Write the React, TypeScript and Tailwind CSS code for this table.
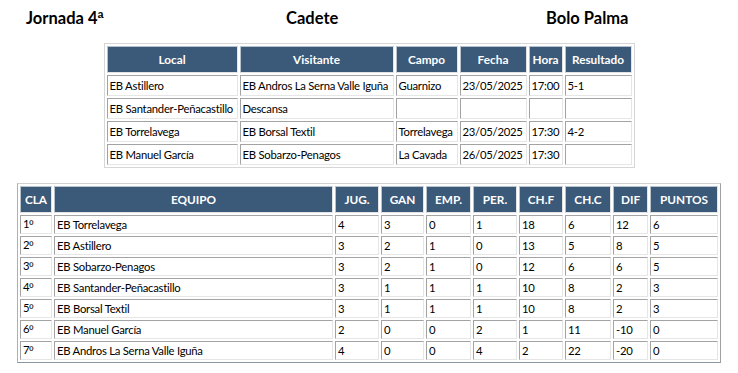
const partidos = [
  { local: "EB Astillero", visitante: "EB Andros La Serna Valle Iguña", campo: "Guarnizo", fecha: "23/05/2025", hora: "17:00", resultado: "5-1" },
  { local: "EB Santander-Peñacastillo", visitante: "Descansa", campo: "", fecha: "", hora: "", resultado: "" },
  { local: "EB Torrelavega", visitante: "EB Borsal Textil", campo: "Torrelavega", fecha: "23/05/2025", hora: "17:30", resultado: "4-2" },
  { local: "EB Manuel García", visitante: "EB Sobarzo-Penagos", campo: "La Cavada", fecha: "26/05/2025", hora: "17:30", resultado: "" },
];

const clasificacion = [
  ["1", "EB Torrelavega", "4", "3", "0", "1", "18", "6", "12", "6"],
  ["2", "EB Astillero", "3", "2", "1", "0", "13", "5", "8", "5"],
  ["3", "EB Sobarzo-Penagos", "3", "2", "1", "0", "12", "6", "6", "5"],
  ["4", "EB Santander-Peñacastillo", "3", "1", "1", "1", "10", "8", "2", "3"],
  ["5", "EB Borsal Textil", "3", "1", "1", "1", "10", "8", "2", "3"],
  ["6", "EB Manuel García", "2", "0", "0", "2", "1", "11", "-10", "0"],
  ["7", "EB Andros La Serna Valle Iguña", "4", "0", "0", "4", "2", "22", "-20", "0"],
];

const th =
  "h-[27px] p-0 bg-[#3b5978] text-white text-[11.8px] font-bold text-center whitespace-nowrap border border-t-[#b8c2cc] border-l-[#b8c2cc] border-b-[#e4e4e4] border-r-[#e4e4e4]";
const td =
  "p-0 pl-[2px] text-left align-middle whitespace-nowrap tracking-[-0.25px] border border-t-[#a3a3a3] border-l-[#a3a3a3] border-b-[#e6e6e6] border-r-[#e6e6e6]";

export default function App() {
  return (
    <div className="w-[738px] h-[373px] bg-white text-black font-['Lato','Liberation_Sans',sans-serif] text-[11.3px] leading-none">
      {/* Cabecera */}
      <div className="grid grid-cols-[260px_260px_200px] pl-[26px] pt-[10px] h-[43px] text-[16.5px] font-bold">
        <div>
          Jornada 4<span className="font-['Liberation_Sans',sans-serif]">ª</span>
        </div>
        <div>Cadete</div>
        <div>Bolo Palma</div>
      </div>

      {/* Partidos */}
      <table className="mx-auto w-[531px] border-separate border-spacing-[2px] border border-[#d6d6d6] table-fixed">
        <thead>
          <tr>
            <th className={`${th} w-[131px]`}>Local</th>
            <th className={`${th} w-[154px]`}>Visitante</th>
            <th className={`${th} w-[62px]`}>Campo</th>
            <th className={`${th} w-[67px]`}>Fecha</th>
            <th className={`${th} w-[34px]`}>Hora</th>
            <th className={`${th} w-[67px]`}>Resultado</th>
          </tr>
        </thead>
        <tbody>
          {partidos.map((p) => (
            <tr key={p.local} className="h-[21px]">
              <td className={td}>{p.local}</td>
              <td className={td}>{p.visitante}</td>
              <td className={td}>{p.campo}</td>
              <td className={td}>{p.fecha}</td>
              <td className={td}>{p.hora}</td>
              <td className={td}>{p.resultado}</td>
            </tr>
          ))}
        </tbody>
      </table>

      {/* Clasificación */}
      <table className="mx-auto mt-[15px] w-[704px] border-separate border-spacing-[2px] border border-t-[#d0d0d0] border-l-[#b0b0b0] border-b-[#8c96a0] border-r-[#a0a0a0] table-fixed">
        <thead>
          <tr>
            <th className={`${th} w-[32px]`}>CLA</th>
            <th className={`${th} w-[279px]`}>EQUIPO</th>
            <th className={`${th} w-[44px]`}>JUG.</th>
            <th className={`${th} w-[43px]`}>GAN</th>
            <th className={`${th} w-[45px]`}>EMP.</th>
            <th className={`${th} w-[44px]`}>PER.</th>
            <th className={`${th} w-[44px]`}>CH.F</th>
            <th className={`${th} w-[46px]`}>CH.C</th>
            <th className={`${th} w-[35px]`}>DIF</th>
            <th className={`${th} w-[68px]`}>PUNTOS</th>
          </tr>
        </thead>
        <tbody>
          {clasificacion.map((fila) => (
            <tr key={fila[0]} className="h-[19px]">
              <td className={td}>
                {fila[0]}
                <span className="font-['Liberation_Sans',sans-serif]">º</span>
              </td>
              {fila.slice(1).map((v, i) => (
                <td key={i} className={td}>
                  {v}
                </td>
              ))}
            </tr>
          ))}
        </tbody>
      </table>
    </div>
  );
}
